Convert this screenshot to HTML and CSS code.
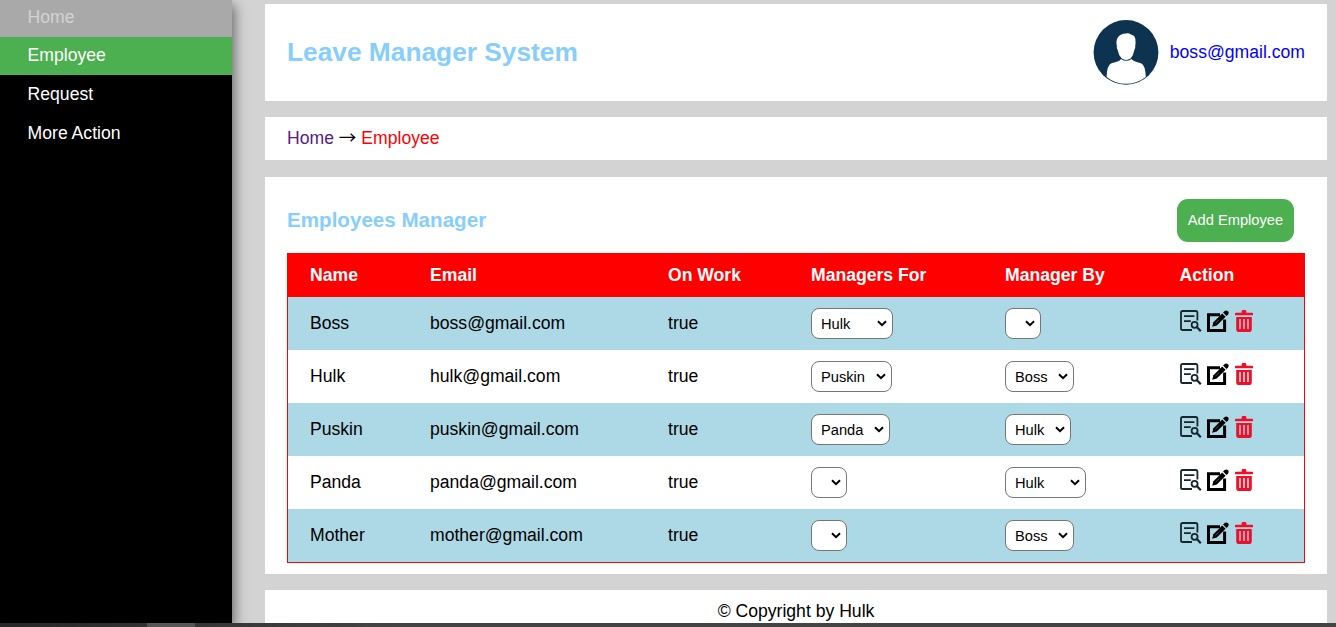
FILE: index.html
```html
<!DOCTYPE html>
<html lang="en">
<head>
<meta charset="utf-8">
<title>Leave Manager System</title>
<link rel="stylesheet" href="styles.css">
</head>
<body>
<svg class="defs" aria-hidden="true">
  <symbol id="view" viewBox="0 0 22 22">
    <g fill="none" stroke="#16262c">
      <path d="M17.4 10.5V2.6Q17.4 1 15.8 1H2.6Q1 1 1 2.6V18.4Q1 20 2.6 20H12" stroke-width="1.8"/>
      <path d="M4 6.2H14.4M4 11.2H10.8" stroke-width="1.7"/>
      <circle cx="14.6" cy="14.8" r="3" stroke-width="1.8"/>
      <path d="M16.8 17L20.8 21.2" stroke-width="2.2"/>
    </g>
  </symbol>
  <symbol id="edit" viewBox="0 0 22 22">
    <path d="M13 4.8H1.5V20.5H17.6V9.5" fill="none" stroke="#000" stroke-width="3"/>
    <path d="M5.2 16.8L6.4 12.2L15.2 3.4L18.6 6.8L9.8 15.6Z"/>
    <path d="M16.1 2.5L17.6 1Q19.3-.2 21 1.2Q22.4 2.9 21 4.4L19.5 5.9Z"/>
    <path d="M8.4 13.3L12 9.7" stroke="#fff" stroke-width=".6" opacity=".5"/>
  </symbol>
  <symbol id="trash" viewBox="0 0 18 22">
    <path d="M0 3.4Q0 2.7.8 2.7H6.6V1.4Q6.6 0 8 0H10Q11.4 0 11.4 1.4V2.7H17.2Q18 2.7 18 3.4V5.2H0Z" fill="#ee1029"/>
    <path fill-rule="evenodd" d="M1.2 7H16.8V19.2Q16.8 22 14 22H4Q1.2 22 1.2 19.2ZM4.3 9V19H5.7V9ZM8.3 9V19H9.7V9ZM12.3 9V19H13.7V9Z" fill="#ee1029"/>
  </symbol>
</svg>
<div class="layout">
  <nav class="sidebar">
    <a class="home">Home</a>
    <a class="active">Employee</a>
    <a>Request</a>
    <a>More Action</a>
  </nav>
  <main>
    <header class="panel top">
      <h1>Leave Manager System</h1>
      <div class="user">
        <svg class="avatar" viewBox="0 0 66 66">
          <circle cx="33" cy="33.4" r="32.4" fill="#0d3351"/>
          <path d="M33 14.4Q36 14 38 15.6Q42.6 16.4 42.5 22.4Q42.8 24 42.2 27Q42.7 29 41.3 31Q40.5 36.5 37.6 39.6Q33 42.2 28.8 39.6Q25.5 36.5 24.7 31Q23.3 29 23.9 27Q22.8 22 24.5 19Q27 14.4 33 14.4Z" fill="#fff"/>
          <path d="M28 39.9Q33 43.7 38.6 39.9Q40 42.4 48 44.2Q52.3 45.9 52.8 57.9Q44 64.7 33 64.7Q22 64.7 13.6 57.9Q14 45.9 18.4 44.2Q27 42.4 28 39.9Z" fill="#fff"/>
        </svg>
        <a class="mail">boss@gmail.com</a>
      </div>
    </header>
    <div class="panel crumbs"><a class="visited">Home</a> <span class="arrow">→</span> <span class="current">Employee</span></div>
    <section class="panel content">
      <div class="heading">
        <h2>Employees Manager</h2>
        <button>Add Employee</button>
      </div>
      <table>
        <colgroup><col class="c1"><col class="c2"><col class="c3"><col class="c4"><col class="c5"><col></colgroup>
        <thead><tr><th>Name</th><th>Email</th><th>On Work</th><th>Managers For</th><th>Manager By</th><th>Action</th></tr></thead>
        <tbody>
          <tr><td>Boss</td><td>boss@gmail.com</td><td>true</td><td><select class="w82"><option>Hulk</option></select></td><td><select class="w36"><option></option></select></td><td><div class="actions"><svg class="view"><use href="#view"/></svg><svg class="edit"><use href="#edit"/></svg><svg class="trash"><use href="#trash"/></svg></div></td></tr>
          <tr><td>Hulk</td><td>hulk@gmail.com</td><td>true</td><td><select class="w81"><option>Puskin</option></select></td><td><select class="w69"><option>Boss</option></select></td><td><div class="actions"><svg class="view"><use href="#view"/></svg><svg class="edit"><use href="#edit"/></svg><svg class="trash"><use href="#trash"/></svg></div></td></tr>
          <tr><td>Puskin</td><td>puskin@gmail.com</td><td>true</td><td><select class="w79"><option>Panda</option></select></td><td><select class="w66"><option>Hulk</option></select></td><td><div class="actions"><svg class="view"><use href="#view"/></svg><svg class="edit"><use href="#edit"/></svg><svg class="trash"><use href="#trash"/></svg></div></td></tr>
          <tr><td>Panda</td><td>panda@gmail.com</td><td>true</td><td><select class="w36"><option></option></select></td><td><select class="w81"><option>Hulk</option></select></td><td><div class="actions"><svg class="view"><use href="#view"/></svg><svg class="edit"><use href="#edit"/></svg><svg class="trash"><use href="#trash"/></svg></div></td></tr>
          <tr><td>Mother</td><td>mother@gmail.com</td><td>true</td><td><select class="w36"><option></option></select></td><td><select class="w69"><option>Boss</option></select></td><td><div class="actions"><svg class="view"><use href="#view"/></svg><svg class="edit"><use href="#edit"/></svg><svg class="trash"><use href="#trash"/></svg></div></td></tr>
        </tbody>
      </table>
    </section>
    <footer class="panel footer">© Copyright by Hulk</footer>
  </main>
</div>
<div class="taskbar"><span></span></div>
</body>
</html>
```
FILE: styles.css
```css
* { box-sizing: border-box; }
body {
  margin: 0;
  height: 627px;
  overflow: hidden;
  display: flex;
  flex-direction: column;
  background: lightgray;
  font-family: "Liberation Sans", Arial, sans-serif;
  font-size: 17.6px;
  line-height: 20px;
}
.defs { position: absolute; width: 0; height: 0; }
.layout { display: flex; height: 623px; overflow: hidden; }
.sidebar {
  width: 232px;
  flex: none;
  background: #000;
  box-shadow: 2px 5px 12px rgba(0, 0, 0, .55);
}
.sidebar a {
  display: block;
  height: 39px;
  padding: 9px 27.6px;
  color: #fff;
}
.sidebar .home { height: 37px; padding-top: 7px; background: darkgray; color: lightgray; }
.sidebar .active { height: 38px; padding-top: 8px; background: #4caf50; }
main {
  flex: 1;
  display: flex;
  flex-direction: column;
  padding: 4px 9px 0 33px;
}
.panel { background: #fff; flex: none; padding: 0 22px; margin-bottom: 16px; }
.top { height: 97px; padding-bottom: 1px; display: flex; align-items: center; justify-content: space-between; }
h1, h2 { margin: 0; color: lightskyblue; }
h1 { font-size: 26.3px; line-height: 30px; }
h2 { font-size: 20.6px; line-height: 24px; padding-bottom: 2px; }
.user { display: flex; align-items: center; gap: 11px; }
.avatar { width: 66px; height: 66px; }
.mail { color: #00f; padding-bottom: 1px; }
.crumbs { height: 43px; padding-top: 11px; margin-bottom: 17px; }
.visited { color: #551a8b; }
.arrow { font-family: "Noto Sans CJK SC", sans-serif; line-height: 1; }
.current { color: red; }
.content { height: 397px; padding-top: 22px; }
.heading {
  height: 43px;
  margin-bottom: 11px;
  padding-right: 11px;
  display: flex;
  align-items: center;
  justify-content: space-between;
}
button {
  width: 117px;
  height: 43px;
  padding: 0 0 2px;
  border: 0;
  border-radius: 11px;
  background: #4caf50;
  color: #fff;
  font: 14.67px "Liberation Sans", Arial, sans-serif;
}
table {
  width: 1018px;
  table-layout: fixed;
  border: 1px solid red;
  border-spacing: 0;
}
.c1 { width: 120px; }
.c2 { width: 238px; }
.c3 { width: 143px; }
.c4 { width: 194px; }
.c5 { width: 174.5px; }
th, td { padding: 0 0 2px 22px; text-align: left; }
th { height: 43px; background: red; color: #fff; }
td { height: 53px; vertical-align: middle; }
tbody tr:nth-child(odd) { background: lightblue; }
select {
  display: block;
  appearance: none;
  height: 31px;
  margin-top: 2px;
  padding: 1px 0 0 9px;
  border: 1px solid #767676;
  border-radius: 8px;
  background: #fff url("data:image/svg+xml,%3Csvg xmlns='http://www.w3.org/2000/svg' width='10' height='7'%3E%3Cpath d='M1 1.2L5 5.2L9 1.2' fill='none' stroke='black' stroke-width='2'/%3E%3C/svg%3E") no-repeat right 5px top 11px;
  color: #000;
  font: 14.67px "Liberation Sans", Arial, sans-serif;
}
.w36 { width: 36px; }
.w66 { width: 66px; }
.w69 { width: 69px; }
.w79 { width: 79px; }
.w81 { width: 81px; }
.w82 { width: 82px; }
.actions { display: flex; height: 22px; margin: 0 0 3px .5px; }
.view, .edit { width: 22px; height: 22px; }
.edit { margin: 0 6.4px 0 5px; }
.trash { width: 18px; height: 22px; }
.footer { height: 43px; padding-top: 11px; text-align: center; }
.taskbar {
  height: 4px;
  flex: none;
  padding-left: 147px;
  background: linear-gradient(90deg, #272727, #444 30%);
}
.taskbar span { display: block; width: 48px; height: 4px; background: #555; }
```
